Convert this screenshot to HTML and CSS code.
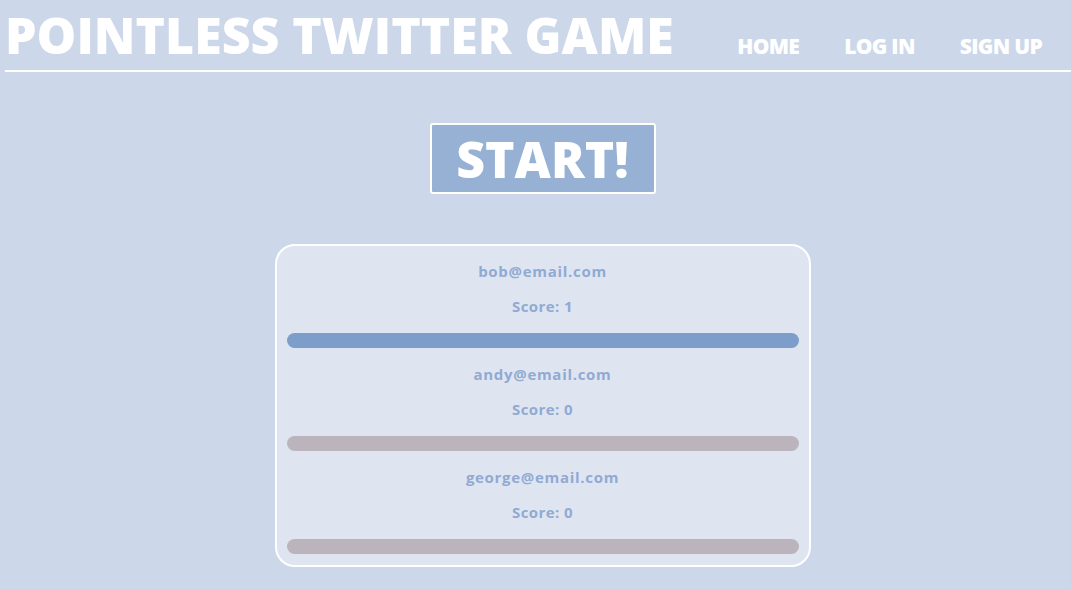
FILE: index.html
```html
<!DOCTYPE html>
<html>
<head>
<meta charset="utf-8">
<link rel="stylesheet" href="styles.css">
</head>
<body>
<header class="header">
  <h1 class="title">POINTLESS TWITTER GAME</h1>
  <nav class="nav">
    <a class="nav-link" href="#">HOME</a>
    <a class="nav-link" href="#">LOG IN</a>
    <a class="nav-link" href="#">SIGN UP</a>
  </nav>
</header>
<main class="main">
  <button class="start">START!</button>
  <section class="board">
    <div class="entry">
      <div class="email">bob@email.com</div>
      <div class="score">Score: 1</div>
      <div class="bar bar-active"></div>
    </div>
    <div class="entry">
      <div class="email">andy@email.com</div>
      <div class="score">Score: 0</div>
      <div class="bar"></div>
    </div>
    <div class="entry">
      <div class="email">george@email.com</div>
      <div class="score">Score: 0</div>
      <div class="bar"></div>
    </div>
  </section>
</main>
</body>
</html>
```
FILE: styles.css
```css
html, body {
  margin: 0;
  padding: 0;
  background: #ccd8ea;
  font-family: "Open Sans", sans-serif;
}
body {
  padding-left: 5px;
}
.header {
  display: flex;
  align-items: flex-end;
  justify-content: space-between;
  border-bottom: 2px solid #ffffff;
  height: 72px;
  box-sizing: border-box;
}
.title {
  margin: 0;
  color: #ffffff;
  font-weight: 800;
  font-size: 50px;
  line-height: 70px;
  white-space: nowrap;
}
.nav {
  display: flex;
  gap: 45px;
  padding-right: 29px;
  padding-bottom: 10px;
}
.nav-link {
  color: #ffffff;
  text-decoration: none;
  font-weight: 800;
  font-size: 21px;
  letter-spacing: -0.7px;
}
.main {
  display: flex;
  flex-direction: column;
  align-items: center;
  padding-left: 9px;
}
.start {
  margin-top: 51px;
  width: 226px;
  height: 71px;
  background: #97b1d4;
  border: 2px solid #ffffff;
  border-radius: 3px;
  color: #ffffff;
  font-family: "Open Sans", sans-serif;
  font-weight: 800;
  font-size: 50px;
  padding: 0;
  line-height: 1;
}
.board {
  margin-top: 50px;
  width: 536px;
  box-sizing: border-box;
  background: #dfe5f0;
  border: 2px solid #ffffff;
  border-radius: 20px;
  padding: 15px 10px 11px;
}
.entry {
  display: flex;
  flex-direction: column;
  align-items: center;
}
.email, .score {
  color: #90aad4;
  font-family: "Open Sans", sans-serif;
  font-weight: 700;
  font-size: 15px;
  line-height: 20px;
  letter-spacing: 0.7px;
}
.score {
  margin-top: 15px;
  letter-spacing: 0.4px;
}
.bar {
  align-self: stretch;
  margin-top: 17px;
  margin-bottom: 16px;
  height: 15px;
  border-radius: 8px;
  background: #bbb4bd;
}
.entry:last-child .bar {
  margin-bottom: 0;
}
.bar-active {
  background: #7d9dca;
}
```
